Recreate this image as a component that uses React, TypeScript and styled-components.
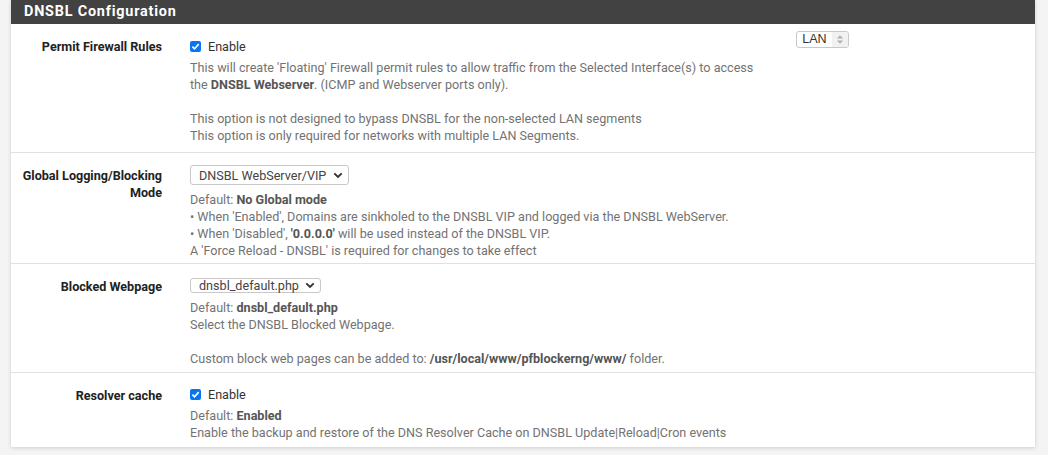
import React from "react";
import styled, { createGlobalStyle } from "styled-components";

const GlobalStyle = createGlobalStyle`
  body {
    margin: 0;
    background: #f4f4f4;
    font-family: Roboto, "Liberation Sans", sans-serif;
  }
`;

const Page = styled.div`
  padding: 0 13px 0 11px;
  height: 455px;
  box-sizing: border-box;
`;

const Panel = styled.div`
  background: #fff;
  box-shadow: 0 1px 4px rgba(0, 0, 0, 0.16);
`;

const Heading = styled.h2`
  margin: 0;
  height: 24px;
  line-height: 24px;
  padding: 0 13px;
  background: #424242;
  color: #fff;
  font-size: 14.4px;
  font-weight: 700;
  letter-spacing: 0.8px;
`;

const Row = styled.div<{ $pb: number }>`
  display: flex;
  align-items: flex-start;
  padding-bottom: ${(p) => p.$pb}px;
  & + & {
    border-top: 1px solid #e0e0e0;
  }
`;

const Label = styled.div`
  width: 151px;
  flex: none;
  padding-top: 13.5px;
  text-align: right;
  font-size: 12.6px;
  font-weight: 700;
  line-height: 17px;
  color: #222;
`;

const Value = styled.div<{ $pt: number }>`
  margin-left: 28px;
  padding-top: ${(p) => p.$pt}px;
  flex: 1;
  font-size: 12.6px;
  line-height: 17px;
  color: #737373;
`;

const Line = styled.div`
  min-height: 17px;
  white-space: nowrap;
  b {
    color: #555;
  }
`;

const CheckRow = styled.label`
  display: flex;
  align-items: center;
  gap: 7px;
  color: #333;
  font-size: 12.6px;
  height: 19px;
  margin-bottom: 3px;
`;

const Box = styled.span`
  width: 11px;
  height: 11px;
  border-radius: 2px;
  background: #0b74f0;
  display: inline-flex;
  align-items: center;
  justify-content: center;
`;

const Select = styled.div<{ $w: number; $h: number }>`
  width: ${(p) => p.$w}px;
  height: ${(p) => p.$h}px;
  box-sizing: border-box;
  border: 1px solid #c8c8c8;
  border-radius: 3px;
  display: flex;
  align-items: center;
  justify-content: space-between;
  padding: 0 5px 0 8px;
  font-size: 12.6px;
  color: #444;
  margin-bottom: 6px;
`;

const Side = styled.div`
  flex: none;
  padding-top: 7px;
  margin-right: 186px;
`;

const ListBox = styled.div`
  height: 17px;
  width: 53px;
  box-sizing: border-box;
  border: 1px solid #c8c8c8;
  border-radius: 3px;
  display: flex;
  font-family: "Liberation Sans", Arial, sans-serif;
  font-size: 12.5px;
  color: #333;
  overflow: hidden;
`;

const ListText = styled.span`
  flex: 1;
  text-align: center;
  line-height: 15px;
`;

const Spin = styled.span`
  width: 16px;
  background: #f1f1f1;
  display: flex;
  align-items: center;
  justify-content: center;
`;

const Check = () => (
  <Box>
    <svg width="9" height="9" viewBox="0 0 9 9">
      <path d="M1.4 4.7 L3.5 6.8 L7.7 2.1" fill="none" stroke="#fff" strokeWidth="1.7" />
    </svg>
  </Box>
);

const Chevron = () => (
  <svg width="10" height="7" viewBox="0 0 10 7">
    <path d="M1.3 1.3 L5 5 L8.7 1.3" fill="none" stroke="#333" strokeWidth="1.9" />
  </svg>
);

export default function App() {
  return (
    <Page>
      <GlobalStyle />
      <Panel>
        <Heading>DNSBL Configuration</Heading>
        <Row $pb={8}>
          <Label>Permit Firewall Rules</Label>
          <Value $pt={13}>
            <CheckRow>
              <Check />
              Enable
            </CheckRow>
            <Line>
              This will create 'Floating' Firewall permit rules to allow traffic from the Selected Interface(s) to access
            </Line>
            <Line>
              the <b>DNSBL Webserver</b>. (ICMP and Webserver ports only).
            </Line>
            <Line />
            <Line>This option is not designed to bypass DNSBL for the non-selected LAN segments</Line>
            <Line>This option is only required for networks with multiple LAN Segments.</Line>
          </Value>
          <Side>
            <ListBox>
              <ListText>LAN</ListText>
              <Spin>
                <svg width="8" height="11" viewBox="0 0 8 11">
                  <path d="M0.8 4.5 L4 1.2 L7.2 4.5 Z M0.8 6.5 L4 9.8 L7.2 6.5 Z" fill="#b0b0b0" />
                </svg>
              </Spin>
            </ListBox>
          </Side>
        </Row>
        <Row $pb={4}>
          <Label>
            Global Logging/Blocking
            <br />
            Mode
          </Label>
          <Value $pt={12}>
            <Select $w={159} $h={20}>
              DNSBL WebServer/VIP <Chevron />
            </Select>
            <Line>
              Default: <b>No Global mode</b>
            </Line>
            <Line>• When 'Enabled', Domains are sinkholed to the DNSBL VIP and logged via the DNSBL WebServer.</Line>
            <Line>
              • When 'Disabled', <b>'0.0.0.0'</b> will be used instead of the DNSBL VIP.
            </Line>
            <Line>A 'Force Reload - DNSBL' is required for changes to take effect</Line>
          </Value>
        </Row>
        <Row $pb={5}>
          <Label>Blocked Webpage</Label>
          <Value $pt={14}>
            <Select $w={131} $h={15}>
              dnsbl_default.php <Chevron />
            </Select>
            <Line>
              Default: <b>dnsbl_default.php</b>
            </Line>
            <Line>Select the DNSBL Blocked Webpage.</Line>
            <Line />
            <Line>
              Custom block web pages can be added to: <b>/usr/local/www/pfblockerng/www/</b> folder.
            </Line>
          </Value>
        </Row>
        <Row $pb={6}>
          <Label>Resolver cache</Label>
          <Value $pt={12}>
            <CheckRow>
              <Check />
              Enable
            </CheckRow>
            <Line>
              Default: <b>Enabled</b>
            </Line>
            <Line>Enable the backup and restore of the DNS Resolver Cache on DNSBL Update|Reload|Cron events</Line>
          </Value>
        </Row>
      </Panel>
    </Page>
  );
}
